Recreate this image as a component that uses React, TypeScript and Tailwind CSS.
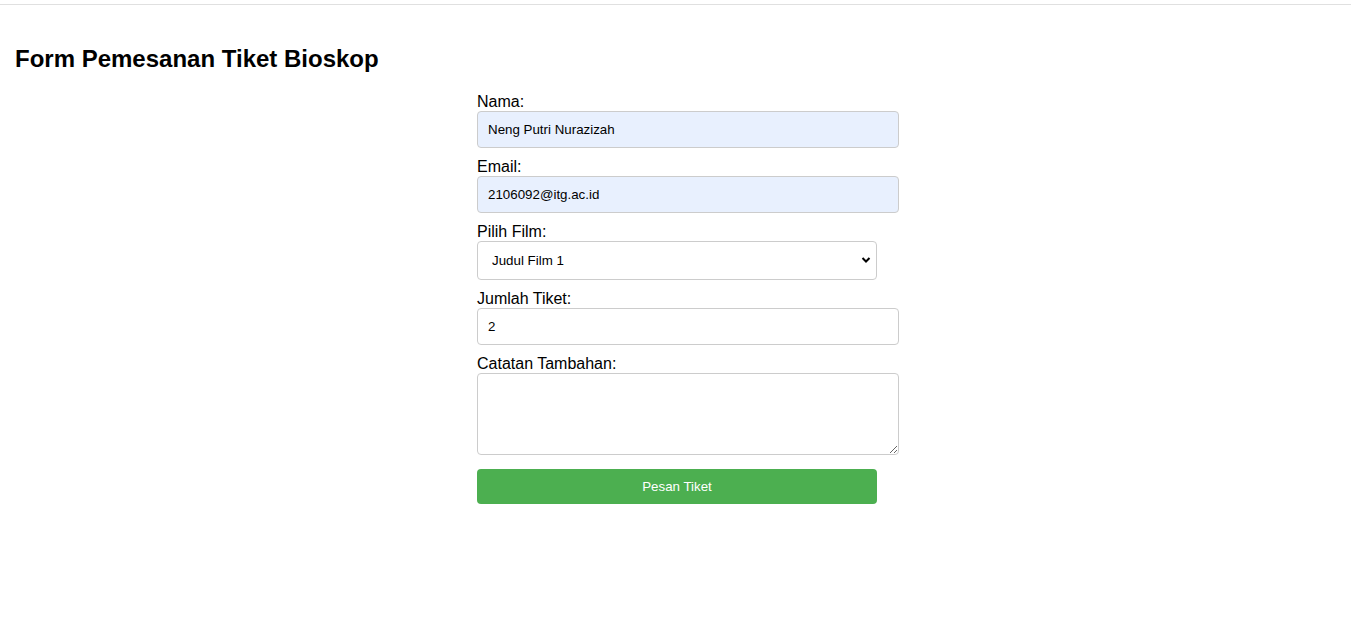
export default function App() {
  return (
    <div className="min-h-[637px] bg-white pt-[4px] font-['Liberation_Sans',Arial,sans-serif] text-black">
      <div className="border-t border-[#e0e0e0]" />
      <div className="px-[15px] pt-[40px]">
        <h2 className="text-[24px] leading-[28px] font-bold">Form Pemesanan Tiket Bioskop</h2>
      </div>
      <div className="flex justify-center pl-[3px] pt-[20px]">
        <form className="w-[400px]" onSubmit={(e) => e.preventDefault()}>
          <label className="block text-[16px] leading-[18px]">Nama:</label>
          <input
            type="text"
            defaultValue="Neng Putri Nurazizah"
            className="box-content block w-full mb-[10px] px-[10px] py-[10px] border border-[#ccc] rounded-[4px] bg-[#e8f0fe] text-[13.333px] leading-[15px] text-black"
          />
          <label className="block text-[16px] leading-[18px]">Email:</label>
          <input
            type="email"
            defaultValue="2106092@itg.ac.id"
            className="box-content block w-full mb-[10px] px-[10px] py-[10px] border border-[#ccc] rounded-[4px] bg-[#e8f0fe] text-[13.333px] leading-[15px] text-black"
          />
          <label className="block text-[16px] leading-[18px]">Pilih Film:</label>
          <div className="relative mb-[10px]">
            <select
              defaultValue="1"
              className="appearance-none block w-full h-[39px] pl-[14px] pr-[30px] border border-[#ccc] rounded-[4px] bg-white text-[13.333px] text-black"
            >
              <option value="1">Judul Film 1</option>
              <option value="2">Judul Film 2</option>
              <option value="3">Judul Film 3</option>
            </select>
            <svg
              className="pointer-events-none absolute right-[6px] top-[15px]"
              width="10"
              height="8"
              viewBox="0 0 10 8"
            >
              <path d="M1.5 2 L5 5.5 L8.5 2" fill="none" stroke="#000" strokeWidth="2" />
            </svg>
          </div>
          <label className="block text-[16px] leading-[18px]">Jumlah Tiket:</label>
          <input
            type="text"
            defaultValue="2"
            className="box-content block w-full mb-[10px] px-[10px] py-[10px] border border-[#ccc] rounded-[4px] bg-white text-[13.333px] leading-[15px] text-black"
          />
          <label className="block text-[16px] leading-[18px]">Catatan Tambahan:</label>
          <textarea className="box-content block w-full h-[60px] mb-[14px] px-[10px] py-[10px] border border-[#ccc] rounded-[4px] bg-white text-[13.333px] leading-[15px] text-black" />
          <button
            type="submit"
            className="block w-full h-[35px] rounded-[4px] bg-[#4caf50] text-white text-[13.333px]"
          >
            Pesan Tiket
          </button>
        </form>
      </div>
    </div>
  );
}
